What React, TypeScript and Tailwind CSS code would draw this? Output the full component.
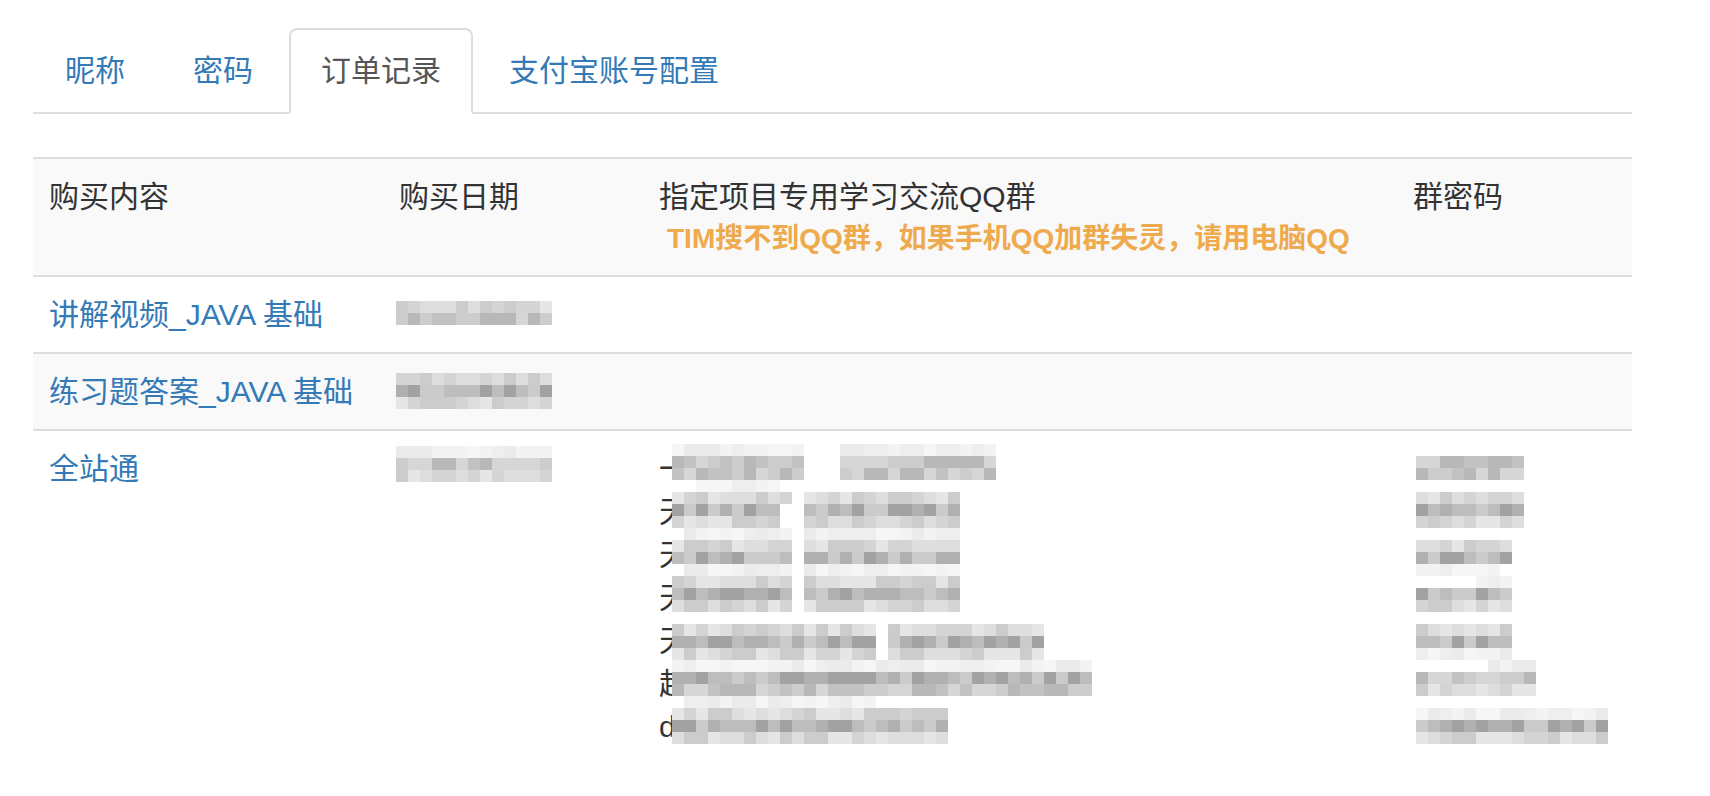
import clsx from "clsx";

type MRow = { t: number; s: [number, number][] };

// mosaic tones: faint, light, mid, dark
const TONES = [
  ["bg-[#f3f3f3]", "bg-[#eeeeee]", "bg-[#ebebeb]", "bg-[#f6f6f6]"],
  ["bg-[#dedede]", "bg-[#d4d4d4]", "bg-[#cccccc]", "bg-[#e6e6e6]"],
  ["bg-[#cdcdcd]", "bg-[#c2c2c2]", "bg-[#b8b8b8]", "bg-[#d6d6d6]"],
  ["bg-[#bdbdbd]", "bg-[#b0b0b0]", "bg-[#a2a2a2]", "bg-[#cbcbcb]"],
];

function pick(seed: number, r: number, c: number) {
  let h = (seed * 374761393 + r * 668265263 + c * 1274126177) | 0;
  h = Math.imul(h ^ (h >>> 13), 1274126177);
  h ^= h >>> 16;
  return (h >>> 0) % 4;
}

function Mosaic({ seed, cols, rows, className }: { seed: number; cols: number; rows: MRow[]; className?: string }) {
  return (
    <div className={clsx("flex flex-col", className)}>
      {rows.map((row, r) => (
        <div key={r} className="flex h-[12px]">
          {Array.from({ length: cols }, (_, c) => {
            const on = row.s.some(([a, b]) => c >= a && c <= b);
            return <div key={c} className={clsx("h-[12px] w-[12px] shrink-0", on && TONES[row.t][pick(seed, r, c)])} />;
          })}
        </div>
      ))}
    </div>
  );
}

const B = (t: number, ...s: [number, number][]): MRow => ({ t, s });

const qqRows: MRow[] = [
  B(0, [0, 10], [14, 26]),
  B(2, [0, 10], [14, 26]),
  B(2, [0, 10], [14, 26]),
  B(0, [2, 8]),
  B(1, [0, 9], [11, 23]),
  B(3, [0, 8], [11, 23]),
  B(1, [0, 8], [11, 23]),
  B(0, [1, 9], [11, 23]),
  B(1, [0, 9], [11, 23]),
  B(3, [0, 9], [11, 23]),
  B(0, [1, 9], [11, 23]),
  B(1, [0, 9], [11, 23]),
  B(3, [0, 9], [11, 23]),
  B(1, [0, 9], [11, 23]),
  B(0),
  B(1, [0, 16], [18, 30]),
  B(3, [0, 16], [18, 30]),
  B(1, [0, 16], [18, 30]),
  B(0, [0, 34]),
  B(3, [0, 34]),
  B(2, [0, 34]),
  B(0, [1, 16]),
  B(1, [0, 22]),
  B(3, [0, 22]),
  B(1, [0, 22]),
];

const pwdRows: MRow[] = [
  B(0),
  B(2, [0, 8]),
  B(2, [0, 8]),
  B(0),
  B(1, [0, 8]),
  B(3, [0, 8]),
  B(1, [0, 8]),
  B(0),
  B(1, [0, 7]),
  B(3, [0, 7]),
  B(0, [0, 6]),
  B(0, [5, 7]),
  B(3, [0, 7]),
  B(1, [0, 7]),
  B(0),
  B(1, [0, 7]),
  B(3, [0, 7]),
  B(0, [0, 7]),
  B(0, [6, 9]),
  B(2, [0, 9]),
  B(1, [0, 9]),
  B(0),
  B(0, [0, 15]),
  B(3, [0, 15]),
  B(1, [0, 15]),
];

const tabs = ["昵称", "密码", "订单记录", "支付宝账号配置"];
const qqHeads = ["一", "天", "天", "天", "天", "超", "d"];

const td = "border-t-2 border-[#dddddd] px-4 py-4 align-top text-left font-normal";

export default function App() {
  return (
    <div className="min-h-[796px] bg-white pl-[33px] pt-[28px] font-['Liberation_Sans','Noto_Sans_CJK_SC',sans-serif] text-[30px] leading-[43px] text-[#333333]">
      <div className="w-[1599px]">
        <ul className="flex border-b-2 border-[#dddddd]">
          {tabs.map((t, i) => (
            <li key={t} className="-mb-[2px] mr-[4px]">
              <a
                className={clsx(
                  "block rounded-t-[8px] border-2 px-[30px] pt-[19px] pb-[20px]",
                  i === 2 ? "border-[#dddddd] border-b-white bg-white text-[#555555]" : "border-transparent text-[#337ab7]"
                )}
              >
                {t}
              </a>
            </li>
          ))}
        </ul>

        <table className="mt-[43px] w-full table-fixed border-collapse">
          <colgroup>
            <col className="w-[350px]" />
            <col className="w-[260px]" />
            <col className="w-[754px]" />
            <col className="w-[235px]" />
          </colgroup>
          <tbody>
            <tr className="bg-[#f9f9f9]">
              <th className={td}>购买内容</th>
              <th className={td}>购买日期</th>
              <th className={td}>
                <div>指定项目专用学习交流QQ群</div>
                <div className="pl-[8px] text-[28px] font-bold leading-[41px] text-[#eeaa4c]">
                  TIM搜不到QQ群，如果手机QQ加群失灵，请用电脑QQ
                </div>
              </th>
              <th className={td}>群密码</th>
            </tr>
            <tr>
              <td className={td}>
                <a className="text-[#337ab7]">讲解视频_JAVA 基础</a>
              </td>
              <td className={td}>
                <Mosaic seed={1} cols={13} className="-ml-[3px] mt-[8px]" rows={[B(1, [0, 12]), B(2, [0, 12])]} />
              </td>
              <td className={td}></td>
              <td className={td}></td>
            </tr>
            <tr className="bg-[#f9f9f9]">
              <td className={td}>
                <a className="text-[#337ab7]">练习题答案_JAVA 基础</a>
              </td>
              <td className={td}>
                <Mosaic seed={2} cols={13} className="-ml-[3px] mt-[3px]" rows={[B(1, [0, 12]), B(3, [0, 12]), B(1, [0, 12])]} />
              </td>
              <td className={td}></td>
              <td className={td}></td>
            </tr>
            <tr>
              <td className={td}>
                <a className="text-[#337ab7]">全站通</a>
              </td>
              <td className={td}>
                <Mosaic seed={3} cols={13} className="-ml-[3px] -mt-[1px]" rows={[B(0, [0, 12]), B(2, [0, 12]), B(1, [0, 12])]} />
              </td>
              <td className={td}>
                <div className="flex">
                  <div className="flex w-[13px] shrink-0 flex-col">
                    {qqHeads.map((h, i) => (
                      <span key={i} className="block h-[43px] whitespace-nowrap">
                        {h}
                      </span>
                    ))}
                  </div>
                  {/* blurred QQ group list, lies over the text */}
                  <div className="relative z-10 -mt-[3px] h-[300px] w-[420px] bg-white">
                    <Mosaic seed={4} cols={35} rows={qqRows} />
                  </div>
                </div>
              </td>
              <td className={td}>
                <Mosaic seed={5} cols={16} rows={pwdRows} className="-mt-[3px] ml-[3px]" />
              </td>
            </tr>
          </tbody>
        </table>
      </div>
    </div>
  );
}
